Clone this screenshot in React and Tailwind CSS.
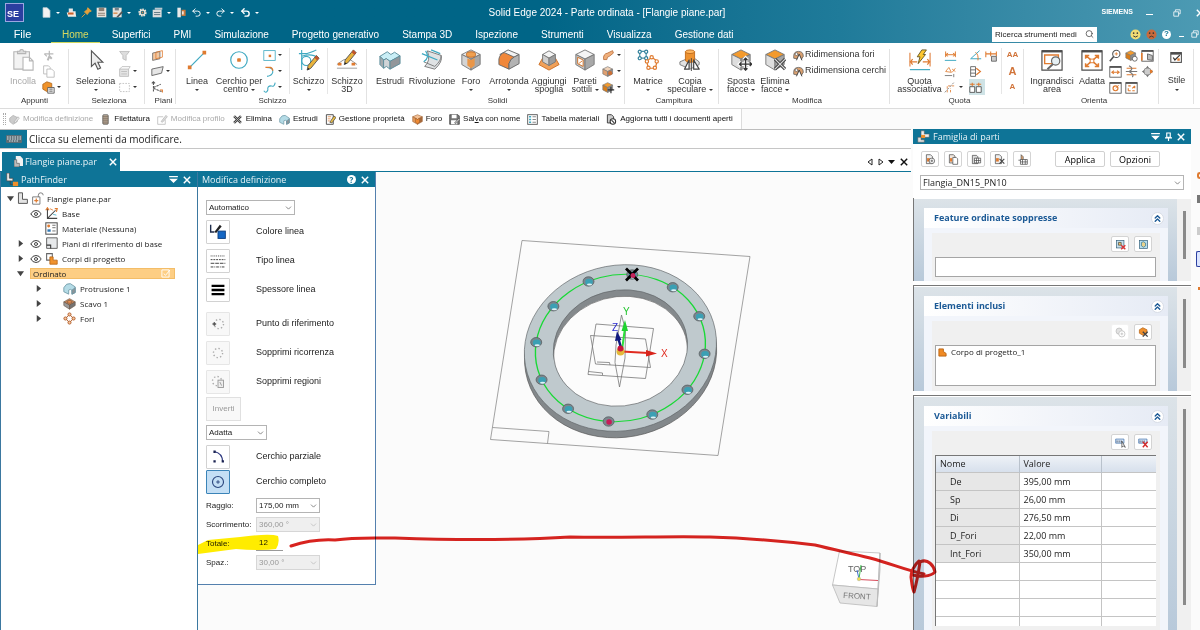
import React, { useState } from 'react';
import { ChevronDown, ChevronsUp, Eye, Undo2, Redo2, Search } from 'lucide-react';

const SIZES = { xs: 'w-[11px] h-[11px]', sm: 'w-[13px] h-[13px]', lg: 'w-[22px] h-[22px]' };

const Svg = ({ size = 'sm', box = 16, children }) => (
  <svg viewBox={`0 0 ${box} ${box}`} className={`${SIZES[size]} shrink-0`} fill="none" aria-hidden="true">
    {children}
  </svg>
);

const OR = '#df7b30';
const DK = '#4d4d4d';
const CY = '#3fa9c1';
const LT = '#b9b9b9';

// Cubo isometrico, base di molte icone
const cube = (top, left, right) => (
  <g stroke="#777" strokeWidth="1" strokeLinejoin="round">
    <path d="M12 1 L22 6 L12 11 L2 6Z" fill={top} />
    <path d="M2 6 L12 11 V23 L2 17Z" fill={left} />
    <path d="M22 6 L12 11 V23 L22 17Z" fill={right} />
  </g>
);

const pencil = (
  <g strokeLinejoin="round">
    <path d="M20 3 L23 6 L14 17 L10 19 L11 14Z" fill="#e8b33c" stroke="#555" />
    <path d="M20 3 L23 6 L21 8.500 L18 5.500Z" fill="#c0532c" />
    <path d="M10 19 l1.300 -2.500 l1.400 1.500z" fill="#222" />
  </g>
);

const BIG = {
  incolla: (
    <g stroke="#b5b5b5" strokeWidth="1.200">
      <path d="M2 3 H19 V22 H2Z" fill="#f3f3f3" />
      <path d="M6 5 V2.500 H8.500 A2 2 0 0 1 12.500 2.500 H15 V5Z" fill="#dcdcdc" />
      <path d="M12 9 H19 L23 13 V23 H12Z M19 9 V13 H23" fill="#fff" />
    </g>
  ),
  seleziona: <path d="M7 2 V19 L11 15.500 L14 22 L17 20.700 L14 14.500 H19.500Z" fill="#ededed" stroke="#555" strokeWidth="1.200" />,
  linea: (
    <g>
      <path d="M4 20 L20 4" stroke={CY} strokeWidth="1.300" />
      <path d="M2 18h4v4H2z M18 2h4v4h-4z" fill={OR} />
    </g>
  ),
  cerchio: (
    <g>
      <circle cx="12" cy="12" r="9" stroke={CY} strokeWidth="1.300" />
      <rect x="10" y="10" width="4" height="4" rx="1" fill={OR} />
    </g>
  ),
  schizzo: (
    <g>
      <path d="M1 5 H10 Q19 2 20 1 M4 1 V23 M4 8 Q15 4 22 10" stroke={CY} strokeWidth="1.200" />
      <circle cx="9" cy="13" r="5" stroke={CY} strokeWidth="1.300" />
      <g transform="translate(0 4)">{pencil}</g>
    </g>
  ),
  schizzo3d: (
    <g>
      <path d="M1 17 L5 14 Q12 8 19 14 L23 17" stroke="#888" />
      <path d="M1 21 H23" stroke="#bbb" strokeWidth="1.500" />
      <path d="M2 15h4v3H2z M17 15h4v3h-4z" fill={OR} />
      <g transform="translate(-1 -2)">{pencil}</g>
    </g>
  ),
  estrudi: (
    <g stroke="#5b8d9b" strokeLinejoin="round">
      <path d="M1 8 L9 3 L13 6 L17 3.500 L23 7.500 L12 13.500 L8 10.500 L5 12Z" fill="#c9eef6" />
      <path d="M1 8 L5 12 V21 L1 17Z" fill="#a4a9ad" />
      <path d="M5 12 L8 10.500 L12 13.500 V22 L8 19 L5 21Z" fill="#d0d4d7" />
      <path d="M12 13.500 L23 7.500 V16 L12 22Z" fill="#92969a" />
    </g>
  ),
  rivoluzione: (
    <g stroke="#777" strokeLinejoin="round">
      <path d="M7 2 L22 7 Q24 14 15 22 L4 19 Q11 13 7 2Z" fill="#dfe2e4" />
      <path d="M3 14 L15 19 Q22 13 22 7" fill="none" />
      <path d="M1 5 L18 12 M5 2 Q10 9 3 14 M11 1 L21 5" stroke={CY} strokeWidth="1.300" />
    </g>
  ),
  foro: (
    <g>
      {cube('#f0f0f0', '#d3d3d3', '#a9a9a9')}
      <ellipse cx="12" cy="6" rx="5" ry="3" fill="#f0a050" stroke="#b8601c" />
      <path d="M8 10 L12 12 L16 10 V18 L12 21 L8 18Z" fill="#e99648" />
    </g>
  ),
  arrotonda: (
    <g stroke="#666" strokeLinejoin="round">
      <path d="M11 1 L23 6 L14 11 L2 6Z" fill="#f2f2f2" />
      <path d="M1 11 Q2 5 7 4 L18 9 Q13 11 12 16 V22 L1 17Z" fill="#f0873a" />
      <path d="M12 22 V16 Q13 11 18 8.500 L23 6 V16Z" fill="#b3b3b3" />
    </g>
  ),
  spoglia: (
    <g stroke="#777" strokeLinejoin="round">
      <path d="M5 10 L1 17 L12 23 L23 17 L19 10Z" fill="#f0a15a" stroke="#cc6b20" />
      <path d="M12 2 L19 6 L12 10 L5 6Z" fill="#f4f4f4" />
      <path d="M5 6 L12 10 V18 L5 14Z" fill="#cfcfcf" />
      <path d="M19 6 L12 10 V18 L19 14Z" fill="#9d9d9d" />
    </g>
  ),
  pareti: (
    <g>
      {cube('#f4f4f4', '#c6c6c6', '#a8a8a8')}
      <path d="M4 9 L10 12 V19 L4 16Z" fill="#fff" stroke="#cc6b20" />
      <path d="M5 16 L9 13" stroke={OR} />
    </g>
  ),
  matrice: (
    <g strokeWidth="1.300">
      <path d="M3 2.500 H10 V10 H3Z" stroke="#4a90a6" />
      <path d="M16 9 L22 13 L20 21 H12.500 L10.500 13.500Z" stroke={OR} />
      <g fill="#fff" stroke="#2f7f9a">
        <circle cx="3" cy="3" r="1.700" /><circle cx="10" cy="3" r="1.700" />
        <circle cx="3" cy="10" r="1.700" /><circle cx="10" cy="10" r="1.700" />
      </g>
      <g fill="#fff" stroke={OR}>
        <circle cx="16" cy="9" r="1.800" /><circle cx="21.500" cy="13.500" r="1.800" />
        <circle cx="19.500" cy="20.500" r="1.800" /><circle cx="12.500" cy="20.500" r="1.800" /><circle cx="10.800" cy="13.500" r="1.800" />
      </g>
    </g>
  ),
  copia: (
    <g stroke="#777" strokeLinejoin="round">
      <path d="M1 14 L8 11 H18 L22 14 V17 L12 22 L1 17Z" fill="#e2e2e2" />
      <path d="M7 3 V12 A5 2.500 0 0 0 17 12 V3Z" fill="#ee922f" stroke="#c06a1b" />
      <ellipse cx="12" cy="3" rx="5" ry="2" fill="#ffb65e" stroke="#c06a1b" />
      <path d="M11 12 V22 H6Z M16 12 V22 H22Z" fill="#fff" stroke="#444" strokeWidth="1.300" />
      <path d="M13.500 10 V24" stroke="#444" />
    </g>
  ),
  sposta: (
    <g>
      {cube('#f39a2d', '#dedede', '#a5a5a5')}
      <path d="M17 10 V23 M10.500 16.500 H23.500 M15 12 L17 10 L19 12 M15 21 L17 23 L19 21 M12.500 14.500 L10.500 16.500 L12.500 18.500 M21.500 14.500 L23.500 16.500 L21.500 18.500" stroke="#fff" strokeWidth="4" />
      <path d="M17 10 V23 M10.500 16.500 H23.500 M15 12 L17 10 L19 12 M15 21 L17 23 L19 21 M12.500 14.500 L10.500 16.500 L12.500 18.500 M21.500 14.500 L23.500 16.500 L21.500 18.500" stroke="#333" strokeWidth="1.500" />
    </g>
  ),
  elimina: (
    <g>
      {cube('#f39a2d', '#dedede', '#a5a5a5')}
      <path d="M12 11 L23 22 M23 11 L12 22" stroke="#444" strokeWidth="3.500" />
      <path d="M12 11 L23 22 M23 11 L12 22" stroke="#ddd" strokeWidth="1.300" />
    </g>
  ),
  quota: (
    <g>
      <path d="M1 4 V19 M23 4 V19" stroke="#e28a4d" strokeWidth="1.300" />
      <path d="M1 14 H9 M15 14 H23 M4 11 L1.500 14 L4 17 M20 11 L22.500 14 L20 17" stroke={OR} strokeWidth="1.300" />
      <path d="M14 1 H19 L15.500 6 H18 L10 16 L12 8.500 H9Z" fill="#ffc72e" stroke="#665522" />
      <path d="M1 22.500 H23" stroke={CY} strokeWidth="1.300" />
    </g>
  ),
  ingrandisci: (
    <g>
      <path d="M1 2 H23 V23 H1Z" fill="#fff" stroke={DK} strokeWidth="1.300" />
      <path d="M1 2.500 H23" stroke={DK} strokeWidth="2.500" />
      <path d="M4 6.500 H19 V16 H4Z" stroke={OR} strokeWidth="1.500" />
      <circle cx="16" cy="13" r="4.500" fill="#e6f0f4" stroke="#666" strokeWidth="1.300" />
      <path d="M13 16.500 L7 22" stroke="#666" strokeWidth="2.200" />
    </g>
  ),
  adatta: (
    <g>
      <path d="M1 2 H23 V23 H1Z" fill="#fff" stroke={DK} strokeWidth="1.300" />
      <path d="M1 2.500 H23" stroke={DK} strokeWidth="2.500" />
      <path d="M5 7 L19 19 M19 7 L5 19 M5 10.500 V7 H9 M15 7 H19 V10.500 M5 15.500 V19 H9 M15 19 H19 V15.500" stroke={OR} strokeWidth="1.600" />
      <rect x="10" y="11" width="4" height="4" fill="#fff" stroke={OR} />
    </g>
  ),
};

const smallCube = (top, side) => (
  <g stroke="#777" strokeWidth="0.800" strokeLinejoin="round">
    <path d="M7 2 L13 5 L7 8 L1 5Z" fill={top} />
    <path d="M1 5 L7 8 V14 L1 11Z" fill={side} />
    <path d="M13 5 L7 8 V14 L13 11Z" fill="#8e8e8e" />
  </g>
);

const frame = (inner) => (
  <g>
    <rect x="1" y="2" width="14" height="13" fill="#fff" stroke={DK} />
    <path d="M1 2.500 H15" stroke={DK} strokeWidth="2" />
    {inner}
  </g>
);

const SMALL = {
  taglia: <g stroke={LT} strokeWidth="1.500"><path d="M9 2 L9 9 M3 6 L14 6" /><path d="M9 9 L7 14 M9 9 L12 12" strokeWidth="2.500" /><path d="M3 6 L6 9" /></g>,
  copia: <g stroke="#b5b5b5" fill="#fff"><path d="M2 1 H8 L10 3 V11 H2Z" /><path d="M6 5 H12 L15 8 V15 H6Z" /></g>,
  pasta: <g><path d="M1 4 L6 1 L12 3 V9 L6 13 L1 10Z" fill="#f0932b" stroke="#b0661b" /><path d="M7 8 H15 V15 H7Z" fill="#e8e8e8" stroke="#555" /><path d="M9 10 H13 M9 12.500 H13" stroke="#555" /></g>,
  filtro: <path d="M2 3 H14 L10 8 V14 L6 12 V8Z" fill="#ddd" stroke={LT} />,
  selez: <g stroke={LT}><path d="M2 5 H13 V14 H2Z" fill="#e4e4e4" /><path d="M4 8 H11 M4 11 H11 M13 5 L15 2 H5 L2 5" /></g>,
  area: <path d="M2 3 H14 V13 H2Z" stroke={LT} strokeDasharray="2 1.500" />,
  piano1: <g><path d="M2 5 L11 3 V12 L2 14Z" fill="#f3c9a2" stroke="#666" /><path d="M6 4 L14 2 V10 L6 12Z" stroke={OR} fill="none" /></g>,
  piano2: <path d="M1 5 L15 2 L13 10 L1 13Z" fill="#e6e6e6" stroke="#555" />,
  piano3: <g stroke="#555" strokeWidth="1.300"><path d="M3 2 V14 M3 8 L12 4 M3 9 L13 13" strokeDasharray="3 1" /><path d="M1 3 L3 1 L5 3" /><path d="M11 11 h3 v3" stroke={OR} /></g>,
  rett: <g><rect x="1" y="2" width="14" height="12" stroke={CY} /><rect x="7" y="7" width="3" height="3" fill={OR} /></g>,
  arco: <g><path d="M4 3 Q13 3 12 9 Q11 13 5 14" stroke={CY} strokeWidth="1.300" /><path d="M3 3 H9 Q12 4 12 7" stroke={OR} strokeWidth="1.500" /></g>,
  curva: <path d="M1 12 Q4 16 6 11 Q5 6 10 6 Q14 8 15 2" stroke={CY} strokeWidth="1.300" />,
  solido1: <path d="M2 13 Q1 6 7 5 L13 2 L14 5 L9 9 Q6 9 6 13Z" fill="#f1b07c" stroke="#b86b38" />,
  solido2: <g>{smallCube('#f0d2b8', '#e0a070')}<circle cx="10" cy="10" r="2.500" fill="#cc6f35" /></g>,
  solido3: <g>{smallCube('#f39a2d', '#d97c18')}<path d="M11 7 V15 M7 11 H15" stroke="#333" strokeWidth="1.500" /></g>,
  foroCmd: <g stroke="#9a5c2c" strokeWidth="0.800"><path d="M8 1 L15 4 L8 8 L1 4Z" fill="#f3c196" /><path d="M1 4 L8 8 V15 L1 11Z" fill="#e39a5c" /><path d="M15 4 L8 8 V15 L15 11Z" fill="#a86a3c" /><path d="M5 6 L8 8 L11 6 V12 L8 14 L5 12Z" fill="#ee8a34" /></g>,
  ridim: <g><path d="M1 9 Q1 2 8 2 Q15 2 15 9 L12 14 L1 12Z" fill="#d9a070" stroke="#555" /><path d="M5 15 L9 6 L13 15" fill="#fff" stroke="#333" strokeWidth="1.300" /><circle cx="5" cy="6" r="2" fill="#fff" stroke="#555" /></g>,
  q1: <g stroke={OR} strokeWidth="1.200"><path d="M2 3 V10 M14 3 V10 M2 7 H14 M5 5 L2 7 L5 9 M11 5 L14 7 L11 9" /><path d="M1 14 H15" stroke={CY} /></g>,
  q2: <g stroke={OR}><path d="M2 8 L6 3 L9 9Z M10 5 L14 8 M14 4 L10 9" /><path d="M1 13 H10 M12 11 V15" stroke="#666" /></g>,
  q3: <g stroke={OR} strokeDasharray="3 1.500"><path d="M4 14 V6 H14 M8 14 V9" /><path d="M1 14 L12 2" stroke="#777" /></g>,
  q4: <g strokeWidth="1.200"><path d="M13 2 L2 12 H15" stroke={CY} /><path d="M8 4 Q12 7 11 14" stroke={OR} /></g>,
  q5: <g><path d="M2 2 H8 V14 H2Z M2 6 H8 M2 10 H8" stroke="#555" /><path d="M9 4 L14 8 L9 12" stroke={OR} strokeWidth="1.500" /></g>,
  q6: <g stroke="#444"><path d="M1 7 H7 V14 H1Z M9 7 H15 V14 H9Z" fill="#fff" /><path d="M1 4 H7 M9 4 H15 M4 2 V6 M12 2 V6" stroke={OR} strokeWidth="1.300" /></g>,
  q7: <g><path d="M1 3 V10 M14 3 V9 M1 6 H14 M7 3 V9" stroke={OR} strokeWidth="1.300" /><path d="M8 9 H14 V15 H8Z" fill="#ccc" stroke="#555" /></g>,
  zoom: <g stroke="#555"><circle cx="9" cy="6" r="4.500" strokeWidth="1.300" /><path d="M6 9 L1 15" strokeWidth="2" /><path d="M7 6 H11 M9 4 V8" stroke={OR} /></g>,
  ruota: <g>{smallCube('#f39a2d', '#d97c18')}<circle cx="12" cy="12" r="3" fill="#fff" stroke="#555" /></g>,
  vista: <g>{frame(<path d="M8 6 L14 8 V14 L8 13Z" fill="#bbb" stroke="#555" />)}<path d="M1 5 V14" stroke={OR} strokeWidth="2" /></g>,
  pan: frame(<path d="M3 9 H13 M6 7 L3.500 9 L6 11 M10 7 L12.500 9 L10 11" stroke={OR} strokeWidth="1.300" />),
  gira: <g strokeWidth="1.400"><path d="M2 4 H14 M2 12 H14" stroke={OR} /><path d="M5 1 Q12 5 5 8 Q12 12 9 15 M1 8 H15" stroke="#777" /></g>,
  bussola: <g><circle cx="8" cy="8" r="4.500" fill="#ccc" stroke="#888" /><path d="M8 1 L10 4 H6Z M8 15 L10 12 H6Z M1 8 L4 6 V10Z M15 8 L12 6 V10Z" fill="#777" /><path d="M11 6h3v4h-3z" fill={OR} /></g>,
  f1: frame(<g><circle cx="8" cy="9" r="3" stroke={OR} strokeWidth="1.500" /><path d="M8 9 L12 5" stroke={OR} /></g>),
  f2: frame(<path d="M4 6 H7 M12 6 L9 9 M4 12 H7 M12 6 V9 M9 12 H12 M4 9 V12" stroke={OR} strokeWidth="1.300" />),
  stile: <g><rect x="1" y="2" width="13" height="12" fill="#fff" stroke={DK} strokeWidth="1.300" /><path d="M1 3 H14" stroke={DK} strokeWidth="3" /><path d="M4 8 L6 11 L12 5" stroke="#333" strokeWidth="1.500" /><path d="M9 9h3v3H9z" fill={OR} /></g>,
  modDef: <g stroke="#aaa" fill="#ccc"><path d="M1 6 L6 2 L12 5 V11 L6 15 L1 11Z" /><path d="M7 12 L13 4 L15 6 L9 13Z" fill="#eee" /></g>,
  filett: <g><rect x="4" y="1" width="8" height="14" rx="1.500" fill="#b9aa99" stroke="#555" /><path d="M4 4 H12 M4 7 H12 M4 10 H12 M4 13 H12" stroke="#6b5b4c" /></g>,
  modProf: <g stroke="#b0b0b0"><path d="M1 4 H9 M12 8 V15 H1 V4" /><path d="M6 11 L13 2 L15 4 L8 12Z" fill="#ddd" /></g>,
  croce: <g><path d="M3 3 L13 13 M13 3 L3 13" stroke="#444" strokeWidth="3.500" /><path d="M3 3 L13 13 M13 3 L3 13" stroke="#ccc" strokeWidth="1" /></g>,
  prop: <g><path d="M2 1 H12 V15 H2Z" fill="#fff" stroke="#444" strokeWidth="1.300" /><path d="M4 4 H9 M4 7 H8 M4 10 H7" stroke={OR} /><path d="M7 12 L13 3 L16 5 L10 13Z" fill="#e9bd46" stroke="#444" /></g>,
  salva: <g><path d="M1 1 H13 L15 3 V15 H1Z" fill="#777" stroke="#333" /><path d="M4 1 H11 V6 H4Z M3 9 H12 V15 H3Z" fill="#fff" /><path d="M8 13 L14 6 L16 8 L10 14Z" fill="#bbb" stroke="#333" strokeWidth="0.700" /></g>,
  tabella: <g><rect x="1" y="1" width="14" height="14" fill="#fff" stroke="#555" strokeWidth="1.300" /><path d="M3 4 H6 M3 8 H6 M3 12 H6" stroke={CY} strokeWidth="2" /><path d="M8 4 H13 M8 8 H13 M8 12 H13" stroke="#555" /></g>,
  aggiorna: <g stroke="#333"><path d="M2 1 H8 L11 4 V13 H2Z" fill="#ccc" strokeWidth="1.300" /><circle cx="10" cy="11" r="4" fill="#fff" strokeWidth="1.500" /><path d="M8 9 L12 13" strokeWidth="1.500" /></g>,
  pezzo: <path d="M3 1 H8 V9 H14 V14 H3Z" fill="#e4e4e4" stroke="#555" strokeWidth="1.200" />,
  lucchetto: <g stroke="#666"><path d="M2 6 H11 V15 H2Z" fill="#fff" /><path d="M9 6 V4 A3 3 0 0 1 15 4" /><path d="M6.500 8 V13 M4 10.500 H9" stroke={OR} strokeWidth="1.500" /></g>,
  base: <g><path d="M3 2 V14 H15 M3 14 L13 4" stroke="#444" strokeWidth="1.300" /><path d="M1 4 L3 1 L5 4 M12 2 L15 2 L14 6" stroke={OR} strokeWidth="1.500" /><path d="M6 2 L10 4" stroke={OR} /><path d="M10 9 L14 10" stroke={CY} /></g>,
  materiale: <g><rect x="1" y="1" width="14" height="14" fill="#fff" stroke="#555" strokeWidth="1.300" /><circle cx="4.500" cy="5" r="1.800" fill={OR} /><path d="M3 9h4v3H3z" fill="#3178b5" /><path d="M9 4 H13 M9 7 H13 M9 11 H13" stroke="#555" /></g>,
  piani: <g><path d="M2 1 H15 V14 H2Z" fill="#e7e9eb" stroke="#666" strokeWidth="1.200" /><path d="M2 10 H7 V14" stroke="#333" strokeWidth="1.300" /></g>,
  corpi: <g><path d="M2 2 H9 V10 H2Z" fill="#fff" stroke="#666" strokeWidth="1.300" /><path d="M6 6 H10 V10 H15 V15 H6Z" fill="#f0922c" stroke="#b66412" /></g>,
  protr: <g stroke="#6b95a3"><path d="M1 7 Q4 1 9 2 L15 6 V13 L11 15 V10 Q9 8 7 10 V15 L1 12Z" fill="#b4dbe6" /><path d="M11 10 L15 7 V13 L11 15Z" fill="#8e9498" /></g>,
  scavo: <g stroke="#6b5648" strokeWidth="0.800"><path d="M8 2 L15 6 L8 10 L1 6Z" fill="#c98455" /><path d="M1 6 L8 10 V15 L1 10.500Z" fill="#9a9a9a" /><path d="M15 6 L8 10 V15 L15 10.500Z" fill="#747474" /><ellipse cx="8" cy="6" rx="3" ry="1.600" fill="#ee8d4c" /></g>,
  fori: <g stroke="#b3622f" strokeWidth="1.200"><path d="M8 3 L13 8 L8 13 L3 8Z" /><g fill="#f6c69f"><circle cx="8" cy="3" r="1.900" /><circle cx="13" cy="8" r="1.900" /><circle cx="8" cy="13" r="1.900" /><circle cx="3" cy="8" r="1.900" /></g></g>,
  famNuovo: <g stroke="#444"><path d="M2 1 H8 L11 4 V14 H2Z" fill="#eee" /><path d="M3 6h4v5H3z" fill={OR} stroke="none" /><circle cx="10" cy="10" r="4" fill="#fff" /><path d="M10 8 V12 M8 10 H12" /></g>,
  famCopia: <g stroke="#444"><path d="M2 1 H8 L10 3 V13 H2Z" fill="#f2e8df" /><path d="M3 6h3v5H3z" fill={OR} stroke="none" /><path d="M7 5 H12 L14 7 V15 H7Z" fill="#fff" /></g>,
  famTab: <g stroke="#444"><path d="M2 2 H8 L10 4 V14 H2Z" fill="#ddd" /><path d="M5 6 H14 V13 H5Z M5 9.500 H14 M8 6 V13 M11 6 V13" fill="#fff" /></g>,
  famX: <g stroke="#444"><path d="M2 1 H8 L11 4 V14 H2Z" fill="#eee" /><path d="M3 6h4v5H3z" fill={OR} stroke="none" /><path d="M8 7 L15 14 M15 7 L8 14" strokeWidth="1.600" /></g>,
  famGriglia: <g stroke="#444"><path d="M2 9 H6 V1 L9 4 V9" fill="#f3b27a" /><path d="M5 8 H15 V15 H5Z M5 11.500 H15 M8 8 V15 M12 8 V15" fill="#fff" /></g>,
  sopprA: <g><rect x="2" y="2" width="11" height="11" fill="#c7e0ec" stroke="#35607a" /><path d="M5 5 H9 V9 H5Z" fill="#efc261" stroke="#444" /><path d="M9 9 L15 15 M15 9 L9 15" stroke="#d33" strokeWidth="2" /></g>,
  sopprB: <g><rect x="2" y="2" width="12" height="12" fill="#b8dfee" stroke="#35607a" /><path d="M5 5 L8 4 L11 6 V10 L8 12 L5 10Z" fill="#e7d28d" stroke="#27739a" /></g>,
  agg: <g stroke="#b8b8b8"><circle cx="6" cy="6" r="4.500" fill="#e2e2e2" /><circle cx="10" cy="10" r="4.500" fill="#fff" /><path d="M10 8 V12 M8 10 H12" /></g>,
  togli: <g><path d="M2 4 L7 1 L13 4 V9 L7 12 L2 9Z" fill="#ee8f2c" stroke="#b36518" /><path d="M7 7 L14 14 M14 7 L7 14" stroke="#444" strokeWidth="2" /></g>,
  varA: <g><path d="M1 3 H13 V9 H1Z" fill="#dce9fa" stroke="#3b6ea8" /><path d="M3 5 V8 M6 5 V8 M9 5 V8" stroke="#234" /><path d="M10 6 V15 L12 13 L15 15Z" fill="#fff" stroke="#333" /></g>,
  varX: <g><path d="M1 3 H13 V9 H1Z" fill="#dce9fa" stroke="#3b6ea8" /><path d="M3 5 V8 M6 5 V8 M9 5 V8" stroke="#234" /><path d="M7 7 L14 15 M14 7 L7 15" stroke="#d42a2a" strokeWidth="2" /></g>,
  // barra di accesso rapido
  nuovo: <path d="M3 1 H9 L13 5 V15 H3Z" fill="#f2f2f2" stroke="#cfd8dc" />,
  apri: <g><path d="M4 2 H10 V6 H14 V13 H4Z" fill="#e8e8e8" /><path d="M1 8 H13 L15 14 H3Z" fill="#f4ece4" /><path d="M3 8 H11 V11 H3Z" fill="#c9602c" /></g>,
  punta: <path d="M10 1 L15 6 L12 7 L9 11 L5 7 L9 4Z M6 10 L1 15" fill="#e6a13b" stroke="#e6a13b" strokeWidth="1.300" />,
  disco: <g><path d="M1 1 H15 V15 H1Z" fill="#ece4dc" /><path d="M4 1 H12 V6 H4Z" fill="#8d7f74" /><path d="M3 9 H13 M3 12 H13" stroke="#8d7f74" strokeWidth="1.500" /></g>,
  discoNome: <g><path d="M1 1 H14 V15 H1Z" fill="#e6e2dc" /><path d="M4 1 H10 V5 H4Z" fill="#77828a" /><path d="M6 15 L14 6 L16 8 L9 15Z" fill="#555" /><path d="M2 9 H8" stroke="#d98e4f" strokeWidth="2" /></g>,
  ingr: <g><circle cx="8" cy="8" r="4.500" stroke="#e9e1d6" strokeWidth="3" strokeDasharray="2.200 1.200" /><circle cx="8" cy="8" r="3.500" stroke="#e9e1d6" strokeWidth="2" /><circle cx="8" cy="8" r="1.300" fill="#d4824b" /></g>,
  tab: <g><path d="M1 4 H14 V15 H1Z" fill="#ddd" /><path d="M4 1 H15 V4 H4Z" fill="#b9c7ce" /><path d="M3 8 H12 M3 11 H12" stroke="#59707c" strokeWidth="1.300" /></g>,
  esci: <g><path d="M2 1 H7 V15 H2Z" fill="#e9e9e9" /><path d="M8 4 H14 V13 H8Z" fill="#c9793c" /><path d="M10 6 V11" stroke="#fff" strokeWidth="2" /></g>,
};

const Small = ({ name, size }) => <Svg size={size}>{SMALL[name]}</Svg>;

const Arrow = () => (
  <span className="inline-block h-0 w-0 border-x-2 border-t-2 border-x-transparent border-t-[#333] align-middle" />
);

// Pulsante grande: icona sopra, etichetta su una o due righe
const BigButton = ({ icon, lines, arrow, width, disabled }) => (
  <button className={`${width} flex shrink-0 flex-col items-center pt-[2px] ${disabled ? 'text-[#a9a9a9]' : 'text-[#333]'}`} disabled={disabled}>
    <Svg size="lg" box={24}>{BIG[icon]}</Svg>
    <span className="mt-[6px] flex flex-col items-center whitespace-nowrap text-[9px] leading-[8px]">
      {lines.map((l, i) => (
        <span key={l}>
          {l}
          {arrow && lines.length > 1 && i === lines.length - 1 && <> <Arrow /></>}
        </span>
      ))}
    </span>
    {arrow && lines.length === 1 && <span className="flex h-4 items-center"><Arrow /></span>}
  </button>
);

const SmallCol = ({ items, width }) => (
  <div className={`${width} flex shrink-0 flex-col`}>
    {items.map(([name, arrow, on]) => (
      <button key={name} aria-label={name} className={`flex h-4 items-center gap-[2px] ${on ? 'bg-[#cfe3e6]' : ''}`}>
        <Small name={name} />
        {arrow && <Arrow />}
      </button>
    ))}
  </div>
);

const Group = ({ label, width, children }) => (
  <div className={`${width} relative flex shrink-0 flex-col pt-1`}>
    <div className="flex h-12">{children}</div>
    <div className="text-center text-[8px] leading-[11px] text-[#333]">{label}</div>
    <span className="absolute right-0 top-[6px] h-[55px] w-px bg-[#e2e2e2]" />
  </div>
);

const Divider = () => <span className="my-px w-px shrink-0 bg-[#e6e6e6]" />;

const Ribbon = () => (
  <div className="flex h-[66px] shrink-0 overflow-hidden border-b border-[#dcdcdc] bg-white">
    <Group label="Appunti" width="w-[69px]">
      <BigButton icon="incolla" lines={['Incolla']} width="w-[46px]" disabled />
      <SmallCol width="w-[22px] -ml-1" items={[['taglia'], ['copia'], ['pasta', true]]} />
    </Group>
    <Group label="Seleziona" width="w-[76px] pl-1">
      <BigButton icon="seleziona" lines={['Seleziona']} arrow width="w-[45px]" />
      <SmallCol width="w-[24px]" items={[['filtro'], ['selez', true], ['area', true]]} />
    </Group>
    <Group label="Piani" width="w-[31px] pl-[6px]">
      <SmallCol width="w-[20px]" items={[['piano1'], ['piano2', true], ['piano3']]} />
    </Group>
    <Group label="Schizzo" width="w-[191px] pl-[2px]">
      <BigButton icon="linea" lines={['Linea']} arrow width="w-[38px]" />
      <BigButton icon="cerchio" lines={['Cerchio per', 'centro']} arrow width="w-[46px]" />
      <SmallCol width="w-[27px] pl-px" items={[['rett', true], ['arco', true], ['curva', true]]} />
      <Divider />
      <BigButton icon="schizzo" lines={['Schizzo']} arrow width="w-[37px]" />
      <Divider />
      <BigButton icon="schizzo3d" lines={['Schizzo', '3D']} width="w-[38px]" />
    </Group>
    <Group label="Solidi" width="w-[258px] pl-[3px]">
      <BigButton icon="estrudi" lines={['Estrudi']} width="w-[40px]" />
      <BigButton icon="rivoluzione" lines={['Rivoluzione']} width="w-[44px]" />
      <BigButton icon="foro" lines={['Foro']} arrow width="w-[34px]" />
      <BigButton icon="arrotonda" lines={['Arrotonda']} arrow width="w-[42px]" />
      <BigButton icon="spoglia" lines={['Aggiungi', 'spoglia']} width="w-[38px]" />
      <BigButton icon="pareti" lines={['Pareti', 'sottili']} arrow width="w-[34px]" />
      <SmallCol width="w-[20px]" items={[['solido1', true], ['solido2', true], ['solido3', true]]} />
    </Group>
    <Group label="Campitura" width="w-[94px] pl-1">
      <BigButton icon="matrice" lines={['Matrice']} arrow width="w-[38px]" />
      <BigButton icon="copia" lines={['Copia', 'speculare']} arrow width="w-[46px]" />
    </Group>
    <Group label="Modifica" width="w-[171px] pl-[5px]">
      <BigButton icon="sposta" lines={['Sposta', 'facce']} arrow width="w-[34px]" />
      <BigButton icon="elimina" lines={['Elimina', 'facce']} arrow width="w-[34px]" />
      <div className="flex flex-col pl-px text-[9px] text-[#333]">
        {['Ridimensiona fori', 'Ridimensiona cerchi'].map((t) => (
          <button key={t} className="flex h-4 items-center gap-px whitespace-nowrap"><Small name="ridim" size="xs" />{t}</button>
        ))}
      </div>
    </Group>
    <Group label="Quota" width="w-[134px] pl-[5px]">
      <BigButton icon="quota" lines={['Quota', 'associativa']} width="w-[49px]" />
      <SmallCol width="w-[25px]" items={[['q1'], ['q2'], ['q3', true]]} />
      <SmallCol width="w-[16px]" items={[['q4'], ['q5'], ['q6', false, true]]} />
      <SmallCol width="w-[16px]" items={[['q7']]} />
      <Divider />
      <div className="flex w-[21px] flex-col items-center font-bold text-[#d1743a]">
        <button className="h-4 text-[8px] leading-4">AA</button>
        <button className="h-4 text-[11px] leading-4">A</button>
        <button className="h-4 text-[8px] leading-4">A</button>
      </div>
    </Group>
    <Group label="Orienta" width="w-[135px] pl-[5px]">
      <BigButton icon="ingrandisci" lines={['Ingrandisci', 'area']} width="w-[46px]" />
      <BigButton icon="adatta" lines={['Adatta']} width="w-[34px]" />
      <SmallCol width="w-[16px]" items={[['zoom'], ['pan'], ['f1']]} />
      <SmallCol width="w-[16px]" items={[['ruota'], ['gira'], ['f2']]} />
      <SmallCol width="w-[16px]" items={[['vista'], ['bussola']]} />
    </Group>
    <Group label="" width="w-[35px]">
      <button className="flex w-full flex-col items-center pt-1 text-[9px] leading-[8px] text-[#333]">
        <Small name="stile" />
        <span className="mt-3">Stile</span>
        <span className="flex h-4 items-center"><Arrow /></span>
      </button>
    </Group>
  </div>
);

const TABS = ['Home', 'Superfici', 'PMI', 'Simulazione', 'Progetto generativo', 'Stampa 3D', 'Ispezione', 'Strumenti', 'Visualizza', 'Gestione dati'];

const WArrow = () => <span className="h-0 w-0 border-x-2 border-t-2 border-x-transparent border-t-white" />;

const Restore = () => (
  <svg viewBox="0 0 10 10" className="h-2 w-2" fill="none" stroke="#fff"><path d="M3 3 V1 H9 V6 H7 M1 3.500 H7 V9 H1Z" /></svg>
);

const CloseX = ({ dark }) => (
  <svg viewBox="0 0 10 10" className="h-2 w-2 shrink-0" fill="none" stroke={dark ? '#111' : '#fff'} strokeWidth="1.800"><path d="M1 1 L9 9 M9 1 L1 9" /></svg>
);

const Face = ({ color, sad }) => (
  <svg viewBox="0 0 12 12" className="h-[11px] w-[11px]">
    <circle cx="6" cy="6" r="5.500" fill={color} />
    <circle cx="4" cy="4.500" r="0.900" fill="#333" /><circle cx="8" cy="4.500" r="0.900" fill="#333" />
    <path d={sad ? 'M3.500 9 Q6 6.500 8.500 9' : 'M3.500 7.500 Q6 10 8.500 7.500'} stroke="#333" fill="none" />
  </svg>
);

const Help = () => (
  <span className="flex h-[9px] w-[9px] items-center justify-center rounded-full bg-white text-[8px] font-bold leading-none text-[#0e7396]">?</span>
);

const Header = () => {
  const [tab, setTab] = useState('Home');
  return (
    <header className="shrink-0 bg-linear-to-r from-[#006587] from-45% via-[#1f7b9a] via-70% to-[#4c9ab3] text-white">
      <div className="grid h-[25px] grid-cols-[1fr_auto_1fr] items-center">
        <div className="flex items-center">
          <span className="ml-[5px] flex h-[19px] w-[19px] items-end border border-[#9aa7e0] bg-[#2b3fa0] px-px pb-[2px] text-[9px] font-bold leading-none">SE</span>
          <div className="ml-[17px] flex items-center gap-[4px]">
            <Small name="nuovo" size="xs" /><WArrow />
            <span className="ml-[2px]"><Small name="apri" size="xs" /></span>
            <Small name="punta" size="xs" />
            <Small name="disco" size="xs" />
            <span className="ml-px"><Small name="discoNome" size="xs" /></span><WArrow />
            <span className="ml-[2px]"><Small name="ingr" size="xs" /></span>
            <Small name="tab" size="xs" /><WArrow />
            <span className="ml-px"><Small name="esci" size="xs" /></span>
            <Undo2 size={11} /><WArrow />
            <span className="ml-px"><Redo2 size={11} /></span><WArrow />
            <span className="ml-[2px]"><Undo2 size={11} strokeWidth={3} /></span><WArrow />
          </div>
        </div>
        <h1 className="whitespace-nowrap pl-[14px] text-[10px]">Solid Edge 2024 - Parte ordinata - [Flangie piane.par]</h1>
        <div className="flex items-center justify-end">
          <span className="mr-[13px] text-[7px] font-black">SIEMENS</span>
          <span className="mr-[20px] mt-1 h-px w-[7px] bg-white" />
          <span className="mr-[15px]"><Restore /></span>
          <span className="w-[4px] overflow-hidden"><CloseX /></span>
        </div>
      </div>
      <div className="flex h-[18px] items-stretch whitespace-nowrap">
        <button className="w-[51px] pr-[6px] text-[11px] leading-[18px]">File</button>
        <nav className="flex gap-px">
          {TABS.map((t) => (
            <button
              key={t}
              onClick={() => setTab(t)}
              className={`border-b px-[11px] text-[10px] leading-[20px] ${tab === t ? 'border-[#cfd65c] text-[#d6d95f]' : 'border-transparent'}`}
            >
              {t}
            </button>
          ))}
        </nav>
        <div className="ml-auto flex items-center gap-[5px]">
          <label className="mr-[28px] flex h-[15px] w-[105px] items-center bg-white px-[3px]">
            <input aria-label="Ricerca strumenti" defaultValue="Ricerca strumenti medi" className="h-[15px] w-full min-w-0 text-[8px] text-[#222] outline-none" />
            <Search size={10} className="text-[#444]" />
          </label>
          <Face color="#f0dc74" />
          <Face color="#c96a3c" sad />
          <Help />
          <span className="ml-[3px] mt-1 h-px w-[5px] bg-white" />
          <span className="ml-[2px] mr-px"><Restore /></span>
        </div>
      </div>
    </header>
  );
};

const COMMANDS = [
  ['modDef', 'Modifica definizione', true],
  ['filett', 'Filettatura'],
  ['modProf', 'Modifica profilo', true],
  ['croce', 'Elimina'],
  ['protr', 'Estrudi'],
  ['prop', 'Gestione proprietà'],
  ['foroCmd', 'Foro'],
  ['salva', 'Salva con nome'],
  ['tabella', 'Tabella materiali'],
  ['aggiorna', 'Aggiorna tutti i documenti aperti'],
];

const CommandBar = () => (
  <div className="flex h-5 shrink-0 bg-[#fbfbfb]">
    <div className="flex items-center gap-[7px] whitespace-nowrap border-r border-[#dcdcdc] bg-white pl-[3px] pr-2">
      <span className="-mr-1 h-3 w-[3px] border-l border-r border-dotted border-[#aaa]" />
      {COMMANDS.map(([icon, text, off]) => (
        <button key={text} disabled={off} className={`flex items-center gap-[3px] text-[8px] ${off ? 'text-[#a9a9a9]' : 'text-[#111]'}`}>
          <Small name={icon} size="xs" />
          {text === 'Salva con nome' ? <span>Sal<u>v</u>a con nome</span> : text}
        </button>
      ))}
    </div>
  </div>
);

const PinMenu = () => (
  <svg viewBox="0 0 10 8" className="h-[7px] w-[9px]"><path d="M0 0 H10 V1.500 H0Z M0 3 H10 L5 8Z" fill="#fff" /></svg>
);

const PanelTitle = ({ children, right }) => (
  <div className="flex h-[15px] shrink-0 items-center bg-[#0e7497] pl-1 pr-[6px] text-[9px] leading-none text-[#e6f2f6]">
    {children}
    <div className="ml-auto flex items-center gap-[5px]">{right}</div>
  </div>
);

const TREE = [
  { level: 1, eye: true, icon: 'base', text: 'Base' },
  { level: 1, icon: 'materiale', text: 'Materiale (Nessuna)' },
  { level: 1, toggle: true, eye: true, icon: 'piani', text: 'Piani di riferimento di base' },
  { level: 1, toggle: true, eye: true, icon: 'corpi', text: 'Corpi di progetto' },
  { level: 1, current: true, text: 'Ordinato' },
  { level: 2, toggle: true, icon: 'protr', text: 'Protrusione 1' },
  { level: 2, toggle: true, icon: 'scavo', text: 'Scavo 1' },
  { level: 2, toggle: true, icon: 'fori', text: 'Fori' },
];

const Toggle = ({ open }) => (
  <span className="flex w-3 shrink-0 justify-center">
    <svg viewBox="0 0 8 8" className="h-[7px] w-[7px]"><path d={open ? 'M0 1.500 H8 L4 7Z' : 'M2 0 V8 L7 4Z'} fill="#444" /></svg>
  </span>
);

const PathFinder = () => (
  <aside className="flex w-[198px] shrink-0 flex-col border-x border-[#3b78a0] bg-white font-['Open_Sans',sans-serif]">
    <PanelTitle right={<><PinMenu /><CloseX /></>}>
      <svg viewBox="0 0 16 16" className="mr-[2px] h-[14px] w-[14px]"><path d="M2 0 H5 V6 H9 V9 H2Z" fill="#eee" stroke="#444" strokeWidth="0.800" /><path d="M6 9 V13 H9" stroke="#444" fill="none" /><path d="M9 10h6v5H9z" fill="#ee8f2c" /></svg>
      PathFinder
    </PanelTitle>
    <ul className="pt-1 text-[8px] text-[#222]">
      <li className="flex h-[15px] items-center pl-[3px]">
        <Toggle open />
        <Small name="pezzo" /><span className="ml-[2px]"><Small name="lucchetto" /></span>
        <span className="ml-[3px]">Flangie piane.par</span>
      </li>
      {TREE.map((n) => (
        <li key={n.text} className={`flex h-[15px] items-center whitespace-nowrap ${n.level === 2 ? 'pl-[31px]' : 'pl-[13px]'}`}>
          {n.toggle || n.current ? <Toggle open={n.current} /> : <span className="w-3" />}
          {n.current ? (
            <span className="ml-1 flex h-[11px] w-[145px] items-center justify-between border border-[#f3bd68] bg-[#fdce84] pl-[2px] pr-1">
              {n.text}
              <svg viewBox="0 0 10 10" className="h-[9px] w-[9px]" fill="none"><path d="M1 1 H9 V9 H1Z" stroke="#fff" /><path d="M3 5 L5 7 L10 1" stroke="#fff" /></svg>
            </span>
          ) : (
            <>
              <span className="ml-px flex w-[18px] shrink-0 justify-center">{n.eye && <Eye size={12} className="text-[#444]" />}</span>
              <Small name={n.icon} />
              <span className="ml-1">{n.text}</span>
            </>
          )}
        </li>
      ))}
    </ul>
  </aside>
);

const Select = ({ label, id, options, width, disabled, className = '' }) => (
  <div className={`relative ${width} ${className}`}>
    <select
      id={id}
      aria-label={label}
      disabled={disabled}
      className={`h-full w-full appearance-none border px-[2px] outline-none ${disabled ? 'border-[#d6d6d6] bg-[#efefef] text-[#999]' : 'border-[#b4b4b4] bg-white text-[#222]'}`}
    >
      {options.map((o) => <option key={o}>{o}</option>)}
    </select>
    <ChevronDown size={9} className={`pointer-events-none absolute right-[2px] top-1/2 -translate-y-1/2 ${disabled ? 'text-[#bbb]' : 'text-[#666]'}`} />
  </div>
);

const DEF_ICONS = {
  colore: <g><path d="M4 4 V12 H8" stroke="#1d2b4a" strokeWidth="1.500" /><path d="M8 12 L14 4 L16 6 L10 13Z" fill="#222" /><rect x="12" y="11" width="8" height="8" fill="#1467c4" stroke="#0c3f80" /></g>,
  tipo: <g stroke="#333"><path d="M4 6.500 H20" strokeDasharray="1 1" /><path d="M4 10.500 H20" strokeDasharray="2 1" /><path d="M4 14.500 H20" strokeDasharray="4 1" /><path d="M4 18.500 H20" strokeDasharray="3 1 1 1" /></g>,
  spessore: <path d="M5 7.500 H19 M5 12 H19 M5 16.500 H19" stroke="#000" strokeWidth="2.500" />,
  punto: <g><circle cx="13" cy="12" r="5" stroke="#aaa" strokeWidth="1.500" strokeDasharray="1.500 2.400" /><path d="M6 12 H10 M8 10 V14" stroke="#555" strokeWidth="1.500" /></g>,
  ricorrenza: <circle cx="12" cy="12" r="5" stroke="#aaa" strokeWidth="1.500" strokeDasharray="1.500 2.400" />,
  regioni: <g><circle cx="11" cy="11" r="5" stroke="#aaa" strokeWidth="1.500" strokeDasharray="1.500 2.400" /><rect x="12" y="10" width="6" height="8" fill="#eee" stroke="#999" /><path d="M14 12 L16 16" stroke="#999" /></g>,
  parziale: <g><path d="M8 6 Q17 8 17 17" stroke="#28337c" strokeWidth="1.200" /><path d="M7 5h2.500v2.500H7z M16 15.500h2.500V18H16z M7 15.500h2.500V18H7z" fill="#1c2452" /></g>,
  completo: <g stroke="#28447c"><circle cx="12" cy="12" r="6" strokeWidth="1.200" /><path d="M10 12 H14 M12 10 V14" /></g>,
};

const DefRow = ({ icon, text, off, on }) => (
  <div className="flex h-6 items-center">
    <button
      aria-label={text}
      disabled={off}
      className={`mr-[26px] flex h-6 w-6 items-center justify-center rounded-[1px] border ${on ? 'border-[#3b84b8] bg-[#c4dff5]' : off ? 'border-[#e6e6e6] bg-[#f8f8f8]' : 'border-[#d2d2d2] bg-white'}`}
    >
      <svg viewBox="0 0 24 24" className="h-[22px] w-[22px]" fill="none">{DEF_ICONS[icon]}</svg>
    </button>
    {text}
  </div>
);

const FormRow = ({ id, label, children }) => (
  <div className="flex h-[15px] items-stretch">
    <label htmlFor={id} className="w-[50px] leading-[15px]">{label}</label>
    {children}
  </div>
);

const DefinitionPanel = () => (
  <section className="w-[178px] shrink-0 self-start border-b border-r border-[#5480ae] bg-white">
    <div className="font-['Open_Sans',sans-serif]">
      <PanelTitle right={<><Help /><CloseX /></>}>Modifica definizione</PanelTitle>
    </div>
    <div className="flex flex-col pb-[14px] pl-2 pt-[13px] text-[9px] text-[#222]">
      <Select label="Modalità" options={['Automatico', 'Manuale']} width="w-[89px]" className="mb-[5px] h-[15px] text-[8px]" />
      <div className="flex flex-col gap-[5px]">
        <DefRow icon="colore" text="Colore linea" />
        <DefRow icon="tipo" text="Tipo linea" />
        <DefRow icon="spessore" text="Spessore linea" />
      </div>
      <div className="mt-[10px] flex flex-col gap-[5px]">
        <DefRow icon="punto" text="Punto di riferimento" off />
        <DefRow icon="ricorrenza" text="Sopprimi ricorrenza" off />
        <DefRow icon="regioni" text="Sopprimi regioni" off />
      </div>
      <button disabled className="mt-[3px] h-6 w-[35px] border border-[#e0e0e0] bg-[#f8f8f8] text-[8px] text-[#999]">Inverti</button>
      <Select label="Riempimento" options={['Adatta', 'Riempi', 'Fisso']} width="w-[61px]" className="mb-[5px] mt-1 h-[15px] text-[8px]" />
      <DefRow icon="parziale" text="Cerchio parziale" />
      <div className="mt-px"><DefRow icon="completo" text="Cerchio completo" on /></div>
      <div className="mt-1 flex flex-col gap-1 text-[8px]">
        <FormRow id="raggio" label="Raggio:"><Select id="raggio" options={['175,00 mm']} width="w-[64px]" /></FormRow>
        <FormRow id="scorr" label="Scorrimento:"><Select id="scorr" options={['360,00 °']} width="w-[64px]" disabled /></FormRow>
        <FormRow id="totale" label="Totale:">
          <input id="totale" defaultValue="12" className="w-[27px] border-b border-[#999] px-[3px] outline-none" />
        </FormRow>
        <FormRow id="spaz" label="Spaz.:"><Select id="spaz" options={['30,00 °']} width="w-[64px]" disabled /></FormRow>
      </div>
    </div>
  </section>
);

// La flangia: 12 fori a 30° sulla circonferenza di foratura
const AFFINE = 'matrix(0.842 0.058 -0.118 0.735 620.4 348)';
const AFFINE_LOW = 'matrix(0.842 0.058 -0.118 0.735 620.6 354.5)';
const HOLES = Array.from({ length: 12 }, (_, i) => {
  const a = (i * Math.PI) / 6;
  return {
    i,
    x: 620.4 + 84.2 * Math.cos(a) - 11.8 * Math.sin(a),
    y: 348 + 5.8 * Math.cos(a) + 73.5 * Math.sin(a),
  };
});

const Model = () => (
  <svg viewBox="376 172 535 458" className="h-full w-full" fill="none" fontFamily="'Liberation Sans', sans-serif">
    <defs>
      <clipPath id="foroInterno"><circle r="79" transform={AFFINE} /></clipPath>
    </defs>
    <g stroke="#8c8c8c" strokeWidth="0.800">
      <path d="M522 240.500 L750 256.500 L718 455.500 L490.500 439.500Z" />
      <path d="M492.500 427.500 L549 431.500 L547.500 443.500" />
    </g>
    <circle r="113" transform={AFFINE_LOW} fill="#83888b" stroke="#555" strokeWidth="0.800" />
    <circle r="113" transform={AFFINE} fill="#bfc9cd" stroke="#5f6467" strokeWidth="0.800" />
    <circle r="79" transform={AFFINE} fill="#84898c" />
    <g clipPath="url(#foroInterno)"><circle r="79" transform={AFFINE_LOW} fill="#fcfcfc" stroke="#666" strokeWidth="0.800" /></g>
    <circle r="79" transform={AFFINE} stroke="#5f6467" strokeWidth="0.800" />
    <circle r="100" transform={AFFINE} stroke="#19d936" strokeWidth="1.600" />
    {HOLES.map((h) => (
      <g key={h.i}>
        <ellipse cx={h.x} cy={h.y} rx="5.500" ry="4.700" fill="#7b868d" stroke="#4f5659" strokeWidth="0.700" />
        {h.i === 3
          ? <circle cx={h.x + 0.500} cy={h.y + 0.500} r="2.800" fill="#c81c58" />
          : <ellipse cx={h.x + 0.500} cy={h.y + 0.500} rx="3.800" ry="3.200" fill="#3ba0b4" />}
        {h.i !== 3 && <ellipse cx={h.x + 1} cy={h.y + 3} rx="2.600" ry="1" fill="#dff3f6" />}
      </g>
    ))}
    <path d="M626 268.500 L638 280.500 M638 268.500 L626 280.500" stroke="#000" strokeWidth="2.800" />
    <circle cx="633" cy="275.500" r="2.500" fill="#c3245a" />
    <g stroke="#777" strokeWidth="0.800">
      <path d="M596 324 L653.500 328.500 L645.500 378.500 L588 374.500Z" />
      <path d="M590.500 335.500 L645.500 339 L650.500 367.500 L595.500 364Z" />
      <path d="M621.500 315 L625.500 330 L625 358 L619.500 387 L615 362.500 L616 345Z" />
      <path d="M588.500 371.500 L602.500 373 V375 M597 362 L609.500 362.500 L610 365" />
    </g>
    <path d="M622 350 L625 328" stroke="#2be03a" strokeWidth="2" />
    <path d="M625 320 L628 331 H621.500Z" fill="#1fd32f" />
    <path d="M621 348 L618 337" stroke="#111a80" strokeWidth="2.500" />
    <path d="M617 331 L621.500 340 L615 341Z" fill="#111a80" />
    <path d="M622 351.500 L648 353" stroke="#e02b20" strokeWidth="2" />
    <path d="M657 353.500 L646 350 V356.500Z" fill="#d8231a" />
    <circle cx="620.500" cy="351.500" r="4" fill="#e3b93a" />
    <circle cx="620.500" cy="348.500" r="3" fill="#c8143c" />
    <text x="623" y="315" fontSize="10" fill="#22c52e">Y</text>
    <text x="612" y="331" fontSize="10" fill="#2a2ad0">Z</text>
    <text x="661" y="357" fontSize="10" fill="#e02b20">X</text>
    {/* cubo di orientamento */}
    <g stroke="#b9b9b9" strokeWidth="0.800">
      <path d="M839.500 551 L880 553 L878 589 L832.500 585Z" fill="#fff" />
      <path d="M832.500 585 L878 589 L877 606.500 L840 603Z" fill="#e6e6e6" />
      <path d="M880 553 L878 589 L877 606.500 L880 570Z" fill="#d4d4d4" />
    </g>
    <text x="848" y="572" fontSize="9" fill="#666">TOP</text>
    <text x="843" y="598" fontSize="8" fill="#777" transform="rotate(3 843 598)">FRONT</text>
    <path d="M859 579 L857 570" stroke="#3f6fd0" />
    <path d="M859 579 L861 565" stroke="#3fbf4f" />
    <path d="M859 579.500 L878 580.500" stroke="#d84a5a" />
    <circle cx="859" cy="579" r="1.800" fill="#f0df4c" stroke="#aa9" strokeWidth="0.500" />
  </svg>
);

const IconButton = ({ icon, disabled }) => (
  <button aria-label={icon} disabled={disabled} className={`flex h-4 w-[18px] items-center justify-center rounded-[2px] border bg-white ${disabled ? 'border-[#f2f2f2]' : 'border-[#d4d4d4]'}`}>
    <Small name={icon} size="xs" />
  </button>
);

const Section = ({ title, icons, size, thumb, children }) => (
  <div className={`${size} flex overflow-hidden border-l border-[#777]`}>
    <div className="flex min-w-0 flex-1 flex-col bg-linear-to-b from-[#dce3e8] to-[#b8c9da] pl-[10px] pr-[9px] pt-[9px]">
      <div className="flex min-h-0 flex-1 flex-col rounded-t-[2px] bg-[#f2f5fb]">
        <h2 className="flex h-5 shrink-0 items-center justify-between bg-linear-to-r from-white to-[#e6ebf5] pl-[10px] pr-1 text-[9px] font-bold text-[#1c5a96]">
          {title}
          <button aria-label="Comprimi" className="flex h-[13px] w-[13px] items-center justify-center rounded-full border border-[#d8dde6] bg-white"><ChevronsUp size={11} strokeWidth={3} /></button>
        </h2>
        <div className="mx-2 mt-[5px] flex min-h-0 flex-1 flex-col bg-[#f0f0f0] pl-[3px] pr-1 pt-[3px]">
          <div className="mb-[5px] flex shrink-0 justify-end gap-[5px] pr-1">{icons}</div>
          {children}
        </div>
      </div>
    </div>
    <div className="flex w-[14px] shrink-0 justify-center bg-[#f0f0f0] pt-3">
      <span className={`${thumb} w-[3px] bg-[#8a8a8a]`} />
    </div>
  </div>
);

const VARIABLES = [
  ['De', '395,00 mm'],
  ['Sp', '26,00 mm'],
  ['Di', '276,50 mm'],
  ['D_Fori', '22,00 mm'],
  ['Int_Fori', '350,00 mm'],
  ['', ''],
  ['', ''],
  ['', ''],
  ['', ''],
];

const FamilyPanel = () => (
  <aside className="flex w-[278px] shrink-0 flex-col bg-white font-['Open_Sans',sans-serif]">
    <PanelTitle right={<>
      <PinMenu />
      <svg viewBox="0 0 8 10" className="h-[9px] w-[7px]" fill="none" stroke="#fff"><path d="M2 1 H6 V6 H2Z M0 6.500 H8 M4 6 V10" strokeWidth="1.300" /></svg>
      <CloseX />
    </>}>
      <svg viewBox="0 0 16 16" className="mr-[3px] h-[13px] w-[13px]"><path d="M5 1 H9 V5 H15 V9 H9 L5 7Z" fill="#eee" stroke="#555" strokeWidth="0.600" /><path d="M5 6 H10 V10 H5Z" fill="#ee8f2c" /><path d="M1 9 H5 V12 H9 V15 H1Z" fill="#ddd" stroke="#555" strokeWidth="0.600" /></svg>
      Famiglia di parti
    </PanelTitle>
    <div className="flex items-center gap-[5px] pb-2 pl-2 pt-[7px]">
      {['famNuovo', 'famCopia', 'famTab', 'famX', 'famGriglia'].map((i) => <IconButton key={i} icon={i} />)}
      <button className="ml-[19px] h-4 w-[50px] rounded-[2px] border border-[#d0d0d0] text-[9px] leading-none">Applica</button>
      <button className="h-4 w-[50px] rounded-[2px] border border-[#d0d0d0] text-[9px] leading-none">Opzioni</button>
    </div>
    <Select label="Membro" options={['Flangia_DN15_PN10']} width="ml-[7px] w-[264px]" className="mb-2 h-[15px] text-[9px] leading-[13px]" />
    <Section title="Feature ordinate soppresse" size="h-[83px] pt-px" thumb="h-12" icons={<><IconButton icon="sopprA" /><IconButton icon="sopprB" /></>}>
      <input aria-label="Feature soppresse" className="h-5 shrink-0 border border-[#a5a5a5] bg-white" />
    </Section>
    <div className="mt-1 border-t border-[#777]" />
    <Section title="Elementi inclusi" size="h-[105px] pt-px" thumb="h-[69px]" icons={<><IconButton icon="agg" disabled /><IconButton icon="togli" /></>}>
      <ul className="h-[41px] shrink-0 border border-[#a5a5a5] bg-white px-[2px] text-[8px] text-[#222]">
        <li className="flex items-center gap-1">
          <svg viewBox="0 0 10 10" className="h-[9px] w-[9px]"><path d="M1 1 H6 V4 L9 6 V9 H1Z" fill="#f08a24" stroke="#b96313" /></svg>
          Corpo di progetto_1
        </li>
      </ul>
    </Section>
    <div className="mt-1 border-t border-[#777]" />
    <Section title="Variabili" size="min-h-0 flex-1 pt-px" thumb="h-[196px]" icons={<><IconButton icon="varA" /><IconButton icon="varX" /></>}>
      <div className="mb-1 min-h-0 flex-1 overflow-hidden border-l border-t border-[#777] bg-white">
        <table className="w-full table-fixed border-collapse text-[9px] leading-none text-[#222]">
          <thead>
            <tr className="h-4 bg-linear-to-b from-[#eef2f7] to-[#d7e0ec] text-left">
              <th className="w-[83px] border-r border-[#b9c2cc] pl-1 font-normal">Nome</th>
              <th className="w-[82px] border-r border-[#b9c2cc] pl-1 font-normal">Valore</th>
              <th aria-label="Altro" />
            </tr>
          </thead>
          <tbody>
            {VARIABLES.map(([name, value], i) => (
              <tr key={i} className="h-[18px] border-y border-[#c4c4c4]">
                <td className={`border-r border-[#c4c4c4] pl-[14px] ${name ? 'bg-[#e7e7e7]' : ''}`}>{name}</td>
                <td className="border-r border-[#c4c4c4] pl-1">{value}</td>
                <td />
              </tr>
            ))}
          </tbody>
        </table>
      </div>
    </Section>
  </aside>
);

// Annotazioni a mano: evidenziatore e freccia rossa
const Annotations = () => (
  <svg viewBox="0 0 1200 630" preserveAspectRatio="none" className="pointer-events-none absolute inset-0 h-full w-full mix-blend-multiply" fill="none">
    <path d="M198 545 L208 540 L240 537 Q270 533 278 536 Q280 543 276 549 Q262 551 236 549 L198 554Z" fill="#ffec00" />
    <g stroke="#d8231f" strokeWidth="3" strokeLinecap="round" strokeLinejoin="round">
      <path d="M291 546 C306 541 318 539 335 540 C355 537 372 538 395 538 C450 540 520 540 570 537 C620 538 670 536 710 537 C745 538 780 541 815 545 C835 550 850 553 870 558 C895 565 905 570 924 574" />
      <path d="M919 561 C914 565 911 572 911 577 C912 584 912 588 914 592 C916 585 918 576 920 562 C928 558 934 566 935 572 C930 577 920 577 913 575" />
    </g>
  </svg>
);

const App = () => (
  <div className="relative flex h-screen flex-col overflow-hidden bg-[#fbfbfb] font-['Liberation_Sans',Arial,sans-serif]">
    <Header />
    <Ribbon />
    <CommandBar />
    <div className="flex min-h-0 flex-1">
      <main className="flex min-w-0 flex-1 flex-col border-t border-[#bdbdbd]">
        <div className="flex h-[19px] items-center border-b border-[#c6c6c6] bg-white font-['Open_Sans',sans-serif] text-[10px] leading-[16px] text-[#222]">
          <span className="mr-[2px] flex h-full w-[27px] items-center justify-center bg-[#0e7497]">
            <svg viewBox="0 0 16 8" className="h-2 w-4"><rect width="16" height="8" rx="1" fill="#5d6e76" /><path d="M1 2 H15 M1 4 H15 M3 6 H13" stroke="#dfe6ea" strokeDasharray="1.500 1" /></svg>
          </span>
          Clicca su elementi da modificare.
        </div>
        <div className="flex h-[23px] items-end justify-between border-b border-[#0e7497] bg-white pl-[2px] font-['Open_Sans',sans-serif]">
          <div className="flex h-[19px] w-[118px] items-center bg-[#0e7497] pl-3 pr-[2px] text-[9px] leading-none text-[#e6f2f6]">
            <svg viewBox="0 0 10 12" className="mr-[2px] h-[11px] w-[9px]"><path d="M2 0 H7 L10 3 V11 H2Z" fill="#f2f2f2" /><path d="M0 4 H3 V8 H6 V12 H0Z" fill="#bbb" stroke="#444" strokeWidth="0.600" /></svg>
            Flangie piane.par
            <button aria-label="Chiudi" className="ml-auto mr-px"><CloseX /></button>
          </div>
          <div className="flex h-[19px] items-center gap-[5px] pr-[3px]">
            <svg viewBox="0 0 28 8" className="h-2 w-7"><path d="M5 1 V7 L1 4Z M12 1 V7 L16 4Z" fill="#fff" stroke="#222" /><path d="M21 2 H28 L24.500 6Z" fill="#111" /></svg>
            <CloseX dark />
          </div>
        </div>
        <div className="flex min-h-0 flex-1">
          <PathFinder />
          <DefinitionPanel />
          <div className="min-w-0 flex-1"><Model /></div>
        </div>
      </main>
      <div className="ml-[2px] flex"><FamilyPanel /></div>
      <div className="flex w-[9px] shrink-0 flex-col items-end overflow-hidden pt-[43px]">
        <span className="h-[7px] w-[3px] rounded-l-full border-2 border-r-0 border-[#df7b30]" />
        <span className="mt-4 h-2 w-[3px] bg-[#777]" />
        <span className="mt-6 h-2 w-[3px] bg-[#ccc]" />
        <span className="mt-4 h-4 w-1 rounded-l-[2px] border border-r-0 border-[#2b3fa0] bg-[#dbe4ff]" />
        <span className="mt-5 h-[3px] w-[2px] bg-[#df7b30]" />
      </div>
    </div>
    <Annotations />
  </div>
);

export default App;
